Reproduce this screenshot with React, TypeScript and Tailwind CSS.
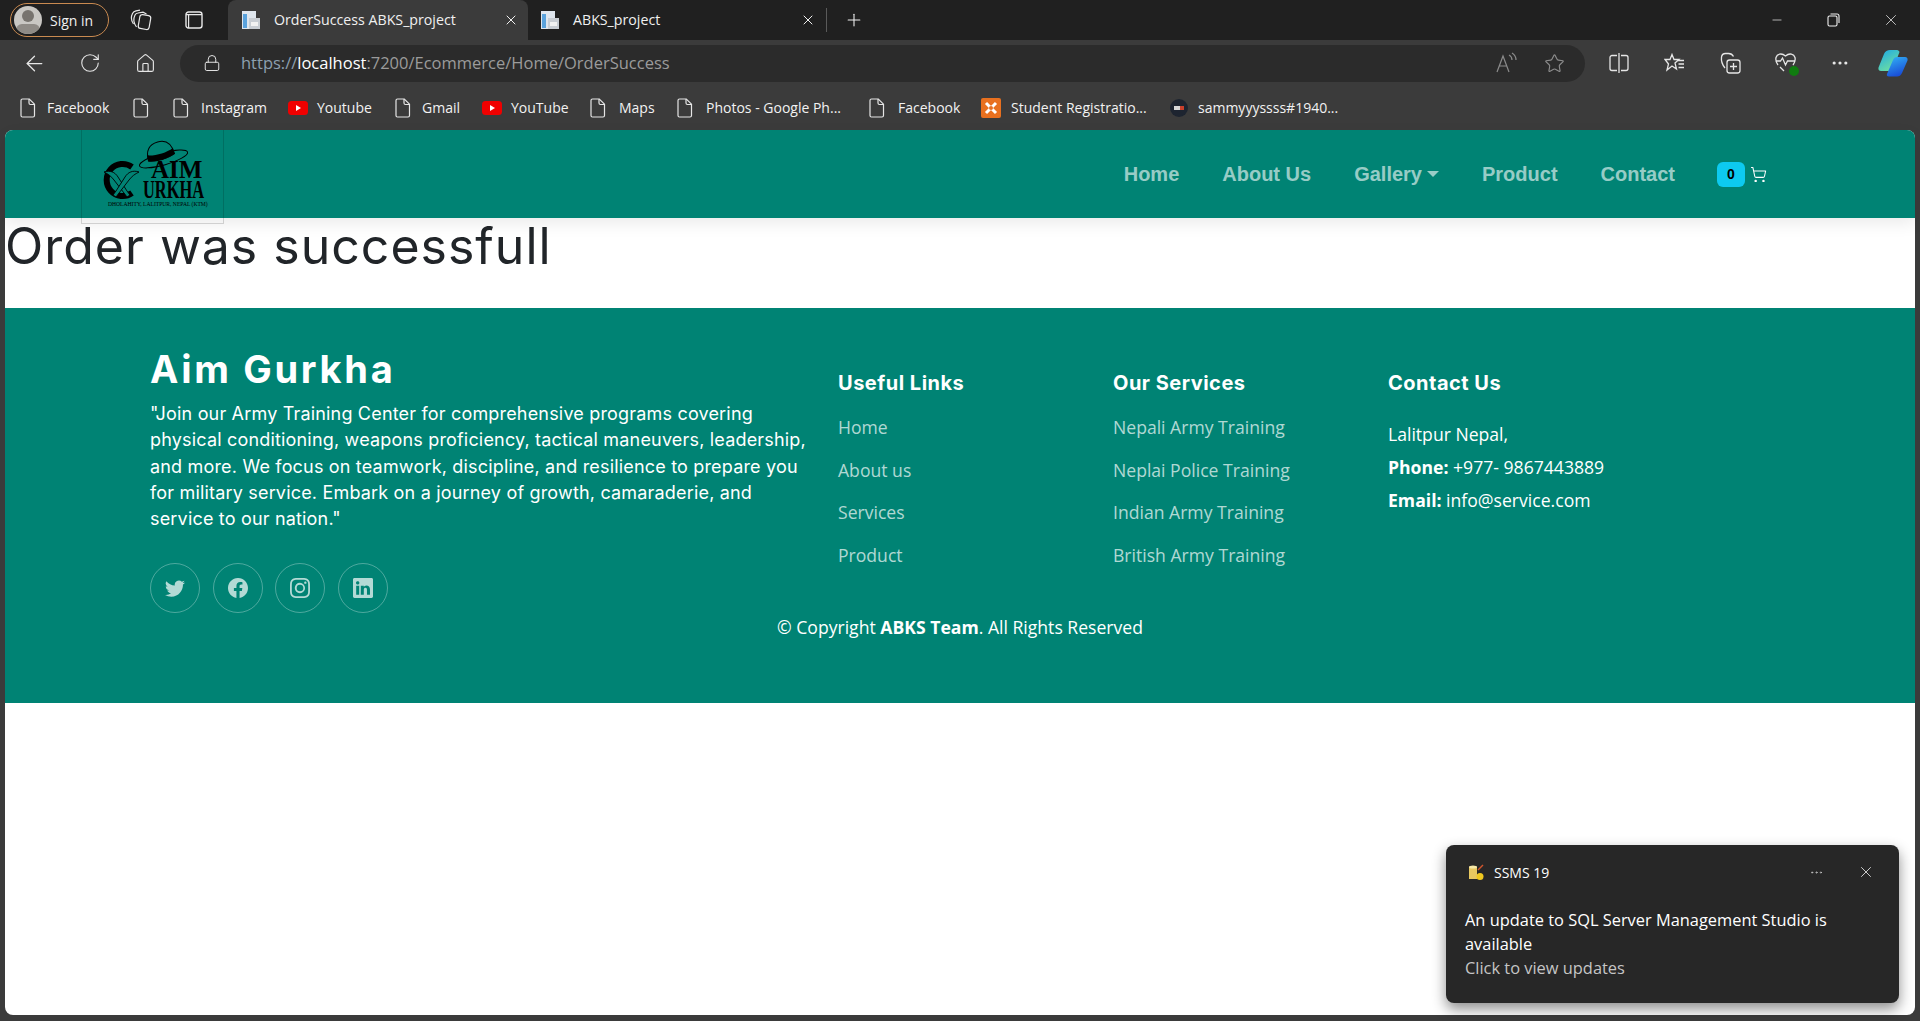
import { ArrowLeft, RotateCw, Home, Lock, Star, Plus, X, Minus, MoreHorizontal, ShoppingCart } from "lucide-react";
import { BsTwitter, BsFacebook, BsInstagram, BsLinkedin } from "react-icons/bs";

const usefulLinks = ["Home", "About us", "Services", "Product"];
const services = ["Nepali Army Training", "Neplai Police Training", "Indian Army Training", "British Army Training"];

function DocIcon() {
  return (
    <svg width="16" height="20" viewBox="0 0 16 20" fill="none" stroke="#e6e6e6" strokeWidth="1.2" className="shrink-0">
      <path d="M2.5 1h6.8L14.5 6.2V17.5a1.5 1.5 0 0 1-1.5 1.5H2.5A1.5 1.5 0 0 1 1 17.5V2.5A1.5 1.5 0 0 1 2.5 1z" />
      <path d="M9 1v4a1.5 1.5 0 0 0 1.5 1.5h4" />
    </svg>
  );
}

function YoutubeIcon() {
  return (
    <svg width="20" height="14" viewBox="0 0 20 14" className="shrink-0">
      <rect width="20" height="14" rx="3.5" fill="#f00000" />
      <path d="M8 4l5 3-5 3z" fill="#fff" />
    </svg>
  );
}

function TabIcon() {
  return (
    <svg width="20" height="20" viewBox="0 0 20 20" className="shrink-0">
      <rect x="1" y="1" width="14" height="18" fill="#dfe6ee" />
      <rect x="2" y="4" width="4" height="14" fill="#5aa2dc" />
      <rect x="8" y="8" width="11" height="11" fill="#c9ced4" />
      <rect x="10" y="12" width="7" height="4" fill="#f2f2f2" />
    </svg>
  );
}

function Bookmark({ icon, label, className }: { icon: React.ReactNode; label?: string; className: string }) {
  return (
    <div className={`flex items-center ${className}`}>
      {icon}
      {label && <span className="text-[14px] text-[#f2f2f2]">{label}</span>}
    </div>
  );
}

function TabBar() {
  return (
    <div className="flex h-10 items-center bg-[#202020] text-[#f0f0f0]">
      <div className="ml-[10px] flex h-[34px] w-[99px] items-center rounded-full border border-[#c98a50] pl-[3px]">
        <div className="relative h-7 w-7 overflow-hidden rounded-full bg-[#c9c7c3]">
          <div className="mx-auto mt-[4px] h-[12px] w-[12px] rounded-full bg-[#77736e]" />
          <div className="mx-auto mt-[2px] h-[12px] w-[24px] rounded-full bg-[#8f8b86]" />
        </div>
        <span className="ml-2 text-[14px]">Sign in</span>
      </div>
      <svg width="22" height="22" viewBox="0 0 22 22" fill="none" stroke="#e8e8e8" strokeWidth="1.2" className="ml-[21px]">
        <rect x="9" y="6" width="11" height="14" rx="2.5" transform="rotate(10 14 13)" />
        <path d="M6.5 18C3.5 14 3 10 5 6c.5-1 1.5-1.8 3-2l5-.8 3.5 1.8" />
        <path d="M3.5 15C1 11.5 .8 8 2.5 4.500 3.2 3 4.5 2 6 1.800l4-.6" />
      </svg>
      <svg width="18" height="18" viewBox="0 0 18 18" fill="none" stroke="#e8e8e8" strokeWidth="1.4" className="ml-[33px]">
        <rect x="1" y="1" width="16" height="16" rx="2.5" />
        <path d="M1 3.6h16M3.6 3.6V17" strokeWidth="1.2" />
      </svg>
      <div className="ml-[25px] flex h-10 w-[300px] items-center rounded-t-lg bg-[#3b3b3b] pl-[13px]">
        <TabIcon />
        <span className="ml-[13px] w-[229px] text-[14.2px] text-[#f0f0f0]">OrderSuccess ABKS_project</span>
        <X size={16} strokeWidth={1.5} />
      </div>
      <div className="flex h-10 w-[298px] items-center pl-[12px]">
        <TabIcon />
        <span className="ml-[13px] w-[227px] text-[14.2px]">ABKS_project</span>
        <X size={16} strokeWidth={1.5} />
      </div>
      <div className="h-[24px] w-px bg-[#5a5a5a]" />
      <Plus size={20} strokeWidth={1.3} className="ml-[17px]" />
      <div className="ml-auto flex items-center">
        <Minus size={14} strokeWidth={1.2} className="mr-[42px]" />
        <svg width="14" height="14" viewBox="0 0 14 14" fill="none" stroke="#f0f0f0" strokeWidth="1.1" className="mr-[42px]">
          <rect x="2" y="3" width="9" height="10" rx="1.5" />
          <path d="M4.5 1H11a2 2 0 0 1 2 2v7" />
        </svg>
        <X size={18} strokeWidth={1} className="mr-[20px]" />
      </div>
    </div>
  );
}

function ToolBar() {
  return (
    <div className="flex h-[45px] items-center pt-[1px] text-[#e6e6e6]">
      <ArrowLeft size={25} strokeWidth={1.2} className="ml-[22px]" />
      <RotateCw size={22} strokeWidth={1.2} className="ml-[32px]" />
      <Home size={21} strokeWidth={1.3} className="ml-[34px]" />
      <div className="ml-[24px] flex h-[37px] w-[1405px] items-center rounded-full bg-[#2b2b2b] pl-[23px] pr-[20px]">
        <Lock size={18} strokeWidth={1.3} />
        <span className="ml-[20px] text-[16.5px] text-[#9b9b9b]">
          <span className="text-[#8da0b0]">https://</span>
          <span className="text-white">localhost</span>:7200/Ecommerce/Home/OrderSuccess
        </span>
        <div className="ml-auto flex items-center gap-[27px] text-[#8c8c8c]">
          <svg width="22" height="22" viewBox="0 0 22 22" fill="none" stroke="#8c8c8c" strokeWidth="1.2">
            <path d="M2 20L8 4l6 16M4.5 14h7M14 3c2 1 3 3 3 5M17 1c2.5 1.5 4 4 4 7" />
          </svg>
          <Star size={21} strokeWidth={1.3} />
        </div>
      </div>
      <svg width="20" height="20" viewBox="0 0 20 20" fill="none" stroke="#e6e6e6" strokeWidth="1.3" className="ml-[24px]">
        <path d="M8 2.5H3a2 2 0 0 0-2 2v11a2 2 0 0 0 2 2h5M12 2.5h5a2 2 0 0 1 2 2v11a2 2 0 0 1-2 2h-5M10 0v20" />
      </svg>
      <svg width="21" height="21" viewBox="0 0 21 21" fill="none" stroke="#e6e6e6" strokeWidth="1.3" className="ml-[35px]">
        <path d="M8 1.5l2 5h5l-4 3.5 1.5 6-4.5-3-5 4 1.5-6L1 6.5h5z" />
        <path d="M14 7.5h6M14.5 11h5.5M14.5 14.5h5.5" />
      </svg>
      <svg width="21" height="22" viewBox="0 0 21 22" fill="none" stroke="#e6e6e6" strokeWidth="1.3" className="ml-[35px]">
        <path d="M5 16C2.5 13 1 9 1.5 5c.3-2 2-3.5 4-3.5h3c2 0 4 1 5 3" />
        <rect x="7" y="8" width="13" height="13" rx="2.5" />
        <path d="M13.5 11v7M10 14.5h7" />
      </svg>
      <div className="relative ml-[34px] h-[22px] w-[21px]">
        <svg width="21" height="22" viewBox="0 0 21 22" fill="none" stroke="#e6e6e6" strokeWidth="1.3">
          <path d="M3 13C1 10.5 .5 8 1 5.5 2 2 6.500 .5 10.500 4c4-3.500 8.500-2 9.500 1.500.5 2.500 0 5-2 7.500M.5 9h5l2-3 3 7 2-4h7.500M5 15l4 4" />
        </svg>
        <div className="absolute bottom-[-2px] right-[-3px] h-[10px] w-[10px] rounded-full bg-[#107c10]" />
      </div>
      <MoreHorizontal size={20} strokeWidth={1.8} className="ml-[34px]" />
      <svg width="30" height="28" viewBox="0 0 30 28" className="ml-[28px]">
        <defs>
          <linearGradient id="cpA" x1="0" y1="0" x2="0.6" y2="1">
            <stop offset="0" stopColor="#1aa6e8" />
            <stop offset="1" stopColor="#6fe0a0" />
          </linearGradient>
          <linearGradient id="cpB" x1="0" y1="0" x2="0.4" y2="1">
            <stop offset="0" stopColor="#32b4f5" />
            <stop offset="1" stopColor="#1a4fd8" />
          </linearGradient>
        </defs>
        <path d="M12 1h7c1.5 0 2 1 2.5 2L15 20c-.5 1.5-1.5 2-3 2H3c-2 0-3-1.5-2.5-3.5L6 5c1-2.5 3.5-4 6-4z" fill="url(#cpA)" />
        <path d="M19 8h8c2 0 3 1.5 2.5 3.5L24 24c-1 2.5-3 3.5-5 3.5h-8c-2 0-2.5-1-2-2.5L15 11c.8-2 2-3 4-3z" fill="url(#cpB)" />
      </svg>
    </div>
  );
}

function BookmarksBar() {
  return (
    <div className="flex h-[45px] items-center">
      <Bookmark icon={<DocIcon />} label="Facebook" className="ml-[20px] w-[113px] gap-[11px]" />
      <Bookmark icon={<DocIcon />} className="w-[40px]" />
      <Bookmark icon={<DocIcon />} label="Instagram" className="w-[115px] gap-[12px]" />
      <Bookmark icon={<YoutubeIcon />} label="Youtube" className="w-[107px] gap-[9px]" />
      <Bookmark icon={<DocIcon />} label="Gmail" className="w-[87px] gap-[11px]" />
      <Bookmark icon={<YoutubeIcon />} label="YouTube" className="w-[108px] gap-[9px]" />
      <Bookmark icon={<DocIcon />} label="Maps" className="w-[87px] gap-[13px]" />
      <Bookmark icon={<DocIcon />} label="Photos - Google Ph..." className="w-[192px] gap-[13px]" />
      <Bookmark icon={<DocIcon />} label="Facebook" className="w-[112px] gap-[13px]" />
      <Bookmark
        icon={
          <svg width="20" height="20" viewBox="0 0 20 20" className="shrink-0">
            <rect width="20" height="20" rx="2" fill="#e8701f" />
            <path d="M5 5l10 10M15 5L5 15" stroke="#fff" strokeWidth="3" />
            <circle cx="10" cy="10" r="2" fill="#e8701f" />
          </svg>
        }
        label="Student Registratio..."
        className="w-[189px] gap-[10px]"
      />
      <Bookmark
        icon={
          <svg width="18" height="18" viewBox="0 0 18 18" className="shrink-0">
            <circle cx="9" cy="9" r="9" fill="#1d2430" />
            <rect x="4" y="7" width="10" height="4" fill="#d8d8d8" />
            <rect x="10" y="7" width="4" height="4" fill="#c8402c" />
          </svg>
        }
        label="sammyyyssss#1940..."
        className="gap-[10px]"
      />
    </div>
  );
}

function Logo() {
  return (
    <div className="absolute left-[76px] top-0 h-[94px] w-[143px] border-x border-b border-[#00000026]">
      <svg width="143" height="94" viewBox="0 0 143 94" fill="none">
        {/* ring of the G with the crossed kukris */}
        <path d="M50 37A16 16 0 1 0 50 63" stroke="#000" strokeWidth="6" />
        <path d="M22 42c6-2 11 0 14 5l9 14 3 4-3 2-3-4-10-13c-3-4-6-6-10-8z" fill="#008374" stroke="#000" strokeWidth="0.9" />
        <path d="M57 42c-6-2-11 0-14 5l-9 14-3 4 3 2 3-4 10-13c3-4 6-6 10-8z" fill="#008374" stroke="#000" strokeWidth="0.9" />
        {/* hat */}
        <g transform="rotate(-16 81 27)">
          <ellipse cx="81" cy="29" rx="25" ry="6" fill="#008374" stroke="#000" strokeWidth="1" />
          <path d="M66 27c0-8 3-16 14-16 10 0 13 8 13 16-8 3-19 3-27 0z" fill="#008374" stroke="#000" strokeWidth="1" />
          <path d="M66 21c8 3 19 3 27 0v6c-8 3-19 3-27 0z" fill="#000" />
        </g>
        <text x="69" y="48" fontFamily='"Liberation Serif", serif' fontWeight="700" fontSize="25" fill="#000">AIM</text>
        <text x="61" y="42.5" transform="scale(1 1.6)" fontFamily='"Liberation Serif", serif' fontWeight="700" fontSize="16.4" fill="#000">URKHA</text>
        <text x="26" y="76" fontFamily='"Liberation Serif", serif' fontSize="5.6" fill="#000">DHOLAHITY, LALITPUR, NEPAL (KTM)</text>
      </svg>
    </div>
  );
}

function Navbar() {
  return (
    <header className="relative flex h-[88px] items-center justify-end rounded-t-lg bg-[#008374] pr-[148px] shadow-[0_6px_16px_rgba(0,0,0,0.08)]" style={{ fontFamily: '"Liberation Sans", Arial, sans-serif' }}>
      <Logo />
      <nav className="flex items-center text-[20px] font-bold text-[#ffffff99]">
        <a className="mr-[43px]">Home</a>
        <a className="mr-[43px]">About Us</a>
        <a className="mr-[43px] flex items-center">
          Gallery
          <span className="ml-[5px] h-0 w-0 border-x-[6px] border-t-[6px] border-x-transparent border-t-[#ffffff99]" />
        </a>
        <a className="mr-[43px]">Product</a>
        <a className="mr-[42px]">Contact</a>
      </nav>
      <span className="flex h-[25px] w-[28px] items-center justify-center rounded-[6px] bg-[#0dcaf0] text-[14px] font-bold text-black">0</span>
      <ShoppingCart size={17} strokeWidth={1.5} className="ml-[5px] text-white" />
    </header>
  );
}

function Footer() {
  return (
    <footer className="bg-[#008374] pl-[145px] pt-[30px] pb-[64px] text-white">
      <div className="grid grid-cols-[688px_275px_275px_1fr]">
        <div>
          <h2 className="text-[38px] font-bold leading-[62px] tracking-[2.7px]" style={{ fontFamily: "Inter, sans-serif" }}>Aim Gurkha</h2>
          <p className="mt-[1px] w-[665px] text-[18px] leading-[26.25px] tracking-[0.18px]" style={{ fontFamily: "Inter, sans-serif" }}>
            "Join our Army Training Center for comprehensive programs covering physical conditioning, weapons proficiency, tactical maneuvers, leadership, and more. We focus on teamwork, discipline, and resilience to prepare you for military service. Embark on a journey of growth, camaraderie, and service to our nation."
          </p>
          <div className="mt-[31px] flex gap-[12.5px] text-[20px] text-[#ffffffb3]">
            {[BsTwitter, BsFacebook, BsInstagram, BsLinkedin].map((Icon, i) => (
              <a key={i} className="flex h-[50px] w-[50px] items-center justify-center rounded-full border border-[#ffffff4d]">
                <Icon />
              </a>
            ))}
          </div>
        </div>
        <div className="pt-[32px]">
          <h4 className="text-[20px] font-bold leading-[26px] tracking-[0.5px]" style={{ fontFamily: "Inter, sans-serif" }}>Useful Links</h4>
          <ul className="mt-[10px]">
            {usefulLinks.map((link) => (
              <li key={link} className="text-[17.6px] leading-[42.6px] text-[#ffffffb3]">{link}</li>
            ))}
          </ul>
        </div>
        <div className="pt-[32px]">
          <h4 className="text-[20px] font-bold leading-[26px] tracking-[0.5px]" style={{ fontFamily: "Inter, sans-serif" }}>Our Services</h4>
          <ul className="mt-[10px]">
            {services.map((link) => (
              <li key={link} className="text-[17.6px] leading-[42.6px] text-[#ffffffb3]">{link}</li>
            ))}
          </ul>
        </div>
        <div className="pt-[32px]">
          <h4 className="text-[20px] font-bold leading-[26px] tracking-[0.5px]" style={{ fontFamily: "Inter, sans-serif" }}>Contact Us</h4>
          <div className="mt-[22px] text-[17.6px] leading-[33px]">
            <p>Lalitpur Nepal,</p>
            <p><strong>Phone:</strong> +977- 9867443889</p>
            <p><strong>Email:</strong> info@service.com</p>
          </div>
        </div>
      </div>
      <p className="mt-[2px] pr-[145px] text-center text-[17.6px] leading-[24px]">
        © Copyright <strong>ABKS Team</strong>. All Rights Reserved
      </p>
    </footer>
  );
}

function Toast() {
  return (
    <div className="absolute bottom-[12px] right-[16px] h-[158px] w-[453px] rounded-lg bg-[#272727] px-[19px] pt-[14px] text-white shadow-[0_6px_14px_rgba(0,0,0,0.45)]">
      <div className="flex h-[26px] items-center">
        <svg width="17" height="17" viewBox="0 0 17 17" className="ml-[3px] shrink-0">
          <path d="M1 3h8v12H1z" fill="#e8c860" />
          <ellipse cx="5" cy="3" rx="4" ry="1.5" fill="#f6e9a8" />
          <path d="M10 6l5-5" stroke="#d0552c" strokeWidth="1.5" />
          <circle cx="12" cy="12.5" r="3.5" fill="#f0c820" />
        </svg>
        <span className="ml-[9px] text-[14px]">SSMS 19</span>
        <MoreHorizontal size={15} strokeWidth={1.2} className="ml-auto text-[#c8c8c8]" />
        <X size={18} strokeWidth={1.2} className="ml-[33px] mr-[5px] text-[#dcdcdc]" />
      </div>
      <p className="mt-[23px] w-[400px] text-[16.4px] leading-[24px]">An update to SQL Server Management Studio is available</p>
      <p className="text-[16.4px] leading-[24px] text-[#c5c5c5]">Click to view updates</p>
    </div>
  );
}

export default function App() {
  return (
    <div className="flex h-screen flex-col overflow-hidden bg-[#3b3b3b]" style={{ fontFamily: '"Open Sans", sans-serif' }}>
      <TabBar />
      <ToolBar />
      <BookmarksBar />
      <main className="relative mx-[5px] mb-[6px] flex-1 rounded-lg bg-white">
        <Navbar />
        <div className="h-[90px] pt-[2px]">
          <h1 className="text-[50px] leading-[53px] tracking-[1px] text-[#212529]" style={{ fontFamily: "Inter, sans-serif" }}>Order was successfull</h1>
        </div>
        <Footer />
        <Toast />
      </main>
    </div>
  );
}
